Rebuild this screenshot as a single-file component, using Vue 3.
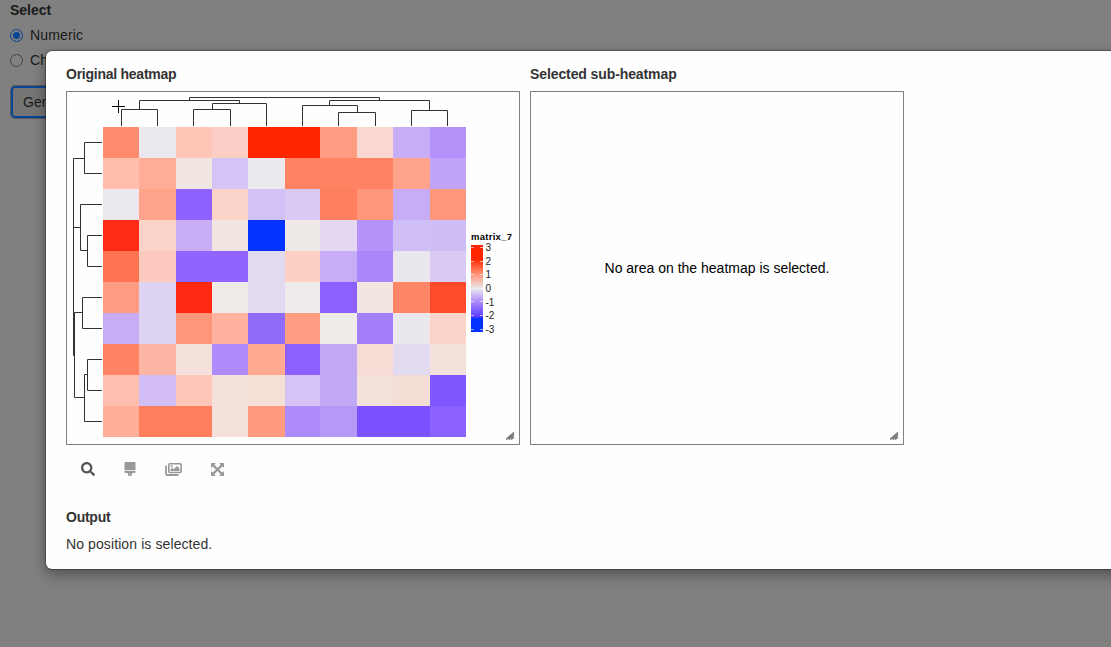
<script setup>
const rows = [
  '#ff8c6e #ebe8ee #ffc6b8 #fccfc6 #ff2600 #ff2600 #ff9c82 #f9d8cf #c6adf5 #b492f9',
  '#ffbdac #ffad97 #f1e6e2 #d5c4f6 #ebe8ee #ff8262 #ff8262 #ff8262 #ffa38b #c0a4f9',
  '#ebe8ee #ffa38b #8d62ff #fcd3c8 #d2c1f4 #dac9f4 #ff7e5e #ff967b #c6adf5 #ff957a',
  '#ff2b14 #fcd3c8 #c8aff5 #f1e6e2 #0433ff #efeae8 #e4d7f2 #b492f9 #d0bef6 #d0bdf6',
  '#ff7252 #fdcabf #9064ff #9064ff #e1daf0 #fdd0c5 #c6adf5 #ab86fb #ebe8ed #d9c9f4',
  '#ff9c82 #dfd3f2 #ff2813 #efebe9 #e1daf0 #eeebea #8b60ff #f1e6e2 #ff8567 #ff4b29',
  '#c6adf5 #dfd3f2 #ff9579 #ffb29d #916bfc #ff9e83 #efebe8 #a47ffb #ebe8ed #fcd3c9',
  '#ff8262 #ffb5a3 #f4e1db #ae8bfb #ffa991 #8b60ff #c2a9f6 #f6dcd5 #e1daf0 #f4e1db',
  '#ffbeae #d2bef5 #fec7ba #f4e1db #f5dfd7 #d4c3f4 #c2a9f6 #f4e1db #f4ddd5 #7e57ff',
  '#ffae99 #ff7e5e #ff7e5e #f4e1db #ff9a7f #ae8bfa #b699f7 #7b51ff #7b51ff #8c62ff'
].map(r => r.split(' '))
const xs = [36, 72, 109, 145, 181, 218, 253, 290, 326, 363, 398.5]
const ys = [35, 66, 97, 128, 159, 190, 221, 251.5, 282.5, 313.5, 344.5]
const ticks = [3, 2, 1, 0, -1, -2, -3]
</script>

<template>
  <div class="screen">
    <aside class="sidebar">
      <strong class="legend">Select</strong>
      <label class="choice"><i class="radio on"></i>Numeric</label>
      <label class="choice"><i class="radio"></i>Character</label>
      <button class="generate">Generate</button>
    </aside>
    <main class="modal">
      <div class="panels">
        <section class="original">
          <h5>Original heatmap</h5>
          <div class="plot">
            <svg width="452" height="352" viewBox="0 0 452 352">
              <g transform="translate(-67 -92)" fill="none" stroke="#333" stroke-width="1">
                <path d="M121.5 126V109.5H157.5V126M139.5 109.5V100.5H239.5V103.5M193.5 126V109.5H230.5V126M212.5 109.5V103.5H266.5V126M189.5 100.5V97.5H379.5V100.5M329.5 105.5V100.5H429.5V110.5M302.5 126V105.5H357.5V112.5M338.5 126V112.5H375.5V126M411.5 126V110.5H447.5V126" />
                <path d="M102 142.5H84.5V173.5H102M84.5 158.5H73.5V227.5H80.5M102 204.5H80.5V250.5H87.5M102 235.5H87.5V266.5H102M73.5 192V355.5H74.5M102 297.5H82.5V328.5H102M82.5 312.5H74.5V397.5H84.5M102 359.5H87.5V390.5H102M87.5 374.5H84.5V421.5H102" />
                <path d="M112 106.5H125M118.5 100V113" stroke="#000" />
              </g>
              <g v-for="(row, r) in rows" :key="r" shape-rendering="crispEdges">
                <rect v-for="(c, i) in row" :key="i" :x="xs[i]" :y="ys[r]" :width="xs[i + 1] - xs[i]" :height="ys[r + 1] - ys[r]" :fill="c" />
              </g>
              <defs>
                <linearGradient id="scale" x1="0" y1="0" x2="0" y2="1">
                  <stop offset="0" stop-color="#ff2600" /><stop offset=".16" stop-color="#ff2600" />
                  <stop offset=".35" stop-color="#ff9b80" /><stop offset=".5" stop-color="#ebe8ee" />
                  <stop offset=".65" stop-color="#af8cfb" /><stop offset=".83" stop-color="#5a3bff" />
                  <stop offset=".84" stop-color="#0433ff" /><stop offset="1" stop-color="#0433ff" />
                </linearGradient>
              </defs>
              <text class="key-title" x="404" y="148" textLength="41">matrix_7</text>
              <rect x="404" y="153" width="12" height="87" fill="url(#scale)" />
              <g v-for="(t, i) in ticks" :key="t">
                <path :d="`M404 ${155.5 + Math.round(i * 13.6)}h3m6 0h3`" stroke="#fff" stroke-opacity=".6" />
                <text class="key-label" x="418.5" :y="159 + i * 13.65">{{ t }}</text>
              </g>
            </svg>
            <svg class="grip" width="9" height="8" viewBox="0 0 9 8"><path d="M0 7.500L8 .5M2.500 7.500L8 2.700M5 7.500L8 5" /></svg>
          </div>
          <nav class="tools">
            <svg width="14" height="14" viewBox="0 0 512 512" fill="#555"><path d="M505 442.700L405.300 343c-4.500-4.500-10.600-7-17-7H372c27.600-35.300 44-79.700 44-128C416 93.100 322.900 0 208 0S0 93.100 0 208s93.100 208 208 208c48.300 0 92.700-16.400 128-44v16.300c0 6.400 2.500 12.500 7 17l99.700 99.700c9.400 9.400 24.600 9.400 33.900 0l28.300-28.300c9.400-9.400 9.400-24.600.1-34zM208 336c-70.700 0-128-57.200-128-128 0-70.700 57.200-128 128-128 70.700 0 128 57.200 128 128 0 70.700-57.200 128-128 128z" /></svg>
            <svg width="12" height="14" viewBox="0 0 12 14" fill="#999"><path d="M1 0h10q.5 0 .5.500V8H.5V.5Q.5 0 1 0zM.5 8.800h11v1q0 1.200-1.200 1.200H8v1.300a2 2 0 0 1-4 0V11H1.700Q.5 11 .5 9.800zM6 11.500a.6.6 0 1 0 0 1.200.6.600 0 0 0 0-1.200z" /></svg>
            <svg width="17" height="14" viewBox="0 0 17 14" fill="none" stroke="#999"><rect x="3.800" y="1.800" width="12.300" height="8.700" rx="1" stroke-width="1.600" /><path d="M1 3.500V11.700Q1 13 2.300 13H13.500" stroke-width="1.800" /><path d="M5.500 9V7.500L7.200 5.800 8.700 7.200 12 4l2.500 2.500V9z" fill="#999" stroke="none" /><circle cx="6.700" cy="4.300" r="1.100" fill="#999" stroke="none" /></svg>
            <svg width="13" height="13" viewBox="0 0 13 13" fill="#999"><path d="M.5 0H4.700L3.400 1.800 6.500 4.900 9.600 1.800 8.300 0H12.500L13 .5V4.700L11.200 3.400 8.100 6.500l3.100 3.100L13 8.300v4.200l-.5.500H8.300l1.300-1.800-3.100-3.100-3.100 3.100L4.700 13H.5L0 12.500V8.300l1.800 1.300 3.100-3.100-3.100-3.100L0 4.700V.5z" /></svg>
          </nav>
        </section>
        <section class="selected">
          <h5 class="wide">Selected sub-heatmap</h5>
          <div class="plot empty">
            <span>No area on the heatmap is selected.</span>
            <svg class="grip" width="9" height="8" viewBox="0 0 9 8"><path d="M0 7.500L8 .5M2.500 7.500L8 2.700M5 7.500L8 5" /></svg>
          </div>
        </section>
      </div>
      <section class="output">
        <h5>Output</h5>
        <p>No position is selected.</p>
      </section>
    </main>
  </div>
</template>

<style>
body { overflow: hidden; }
</style>
<style scoped>
.screen { position: relative; width: 1111px; height: 647px; overflow: hidden; background: #808080; color: #333; font: 14px/20px "Liberation Sans", Arial, sans-serif; }
.sidebar { display: flex; flex-direction: column; align-items: flex-start; padding-left: 10px; color: #1a1a1a; }
.legend { height: 25px; }
.choice { display: flex; align-items: center; gap: 7px; height: 20px; margin-bottom: 5px; letter-spacing: .15px; }
.radio { box-sizing: border-box; width: 13px; height: 13px; border: 1px solid #444; border-radius: 50%; }
.radio.on { border-color: #0a4595; background: #0a4595; background-clip: content-box; padding: 2px; }
.generate { box-sizing: border-box; width: 90px; height: 32px; margin: 11px 0 0 1px; padding: 0 10px; text-align: left; font: inherit; color: #1a1a1a; background: #757575; border: 2px solid #0a4595; border-radius: 4px; outline: 1px solid #5c5c5c; }
.modal { position: absolute; left: 46px; top: 51px; width: 1140px; height: 518px; box-sizing: border-box; padding: 13px 20px; background: #fefefe; border-radius: 6px; box-shadow: 0 5px 15px rgba(0, 0, 0, .4), 0 0 1px 1px rgba(0, 0, 0, .3); }
.panels { display: flex; gap: 10px; }
h5 { margin: 0 0 7px; font-size: 14px; line-height: 20px; font-weight: bold; letter-spacing: -.25px; white-space: nowrap; }
h5.wide { letter-spacing: -.1px; }
.plot { position: relative; box-sizing: border-box; width: 454px; height: 354px; border: 1px solid #808080; }
.plot > svg { display: block; }
.empty { display: flex; align-items: center; justify-content: center; width: 374px; color: #000; white-space: nowrap; }
.plot > .grip { position: absolute; right: 4px; bottom: 4px; fill: none; stroke: #777; stroke-width: 1.6; }
.key-title { font-size: 9.5px; font-weight: bold; fill: #000; }
.key-label { font-size: 10px; fill: #222; }
.tools { display: flex; align-items: center; height: 48px; padding-left: 15px; }
.tools svg:nth-child(2) { margin-left: 29px; }
.tools svg:nth-child(3) { margin-left: 29px; }
.tools svg:nth-child(4) { margin-left: 29px; }
.output { padding-top: 14px; }
.output p { margin: 0; letter-spacing: .1px; }
</style>
